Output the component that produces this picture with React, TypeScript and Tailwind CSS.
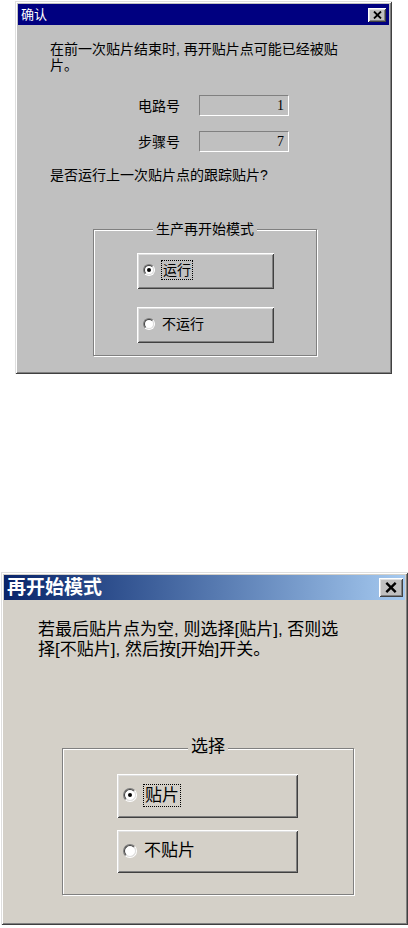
import type { ReactNode } from 'react';

const cjk = { fontFamily: '"Liberation Sans", "Noto Sans CJK SC", sans-serif' };

const raised =
  'shadow-[inset_1px_1px_0_#ffffff,inset_-1px_-1px_0_#404040,inset_2px_2px_0_#dfdfdf,inset_-2px_-2px_0_#808080]';
const frame =
  'shadow-[inset_1px_1px_0_#dfdfdf,inset_-1px_-1px_0_#404040,inset_2px_2px_0_#ffffff,inset_-2px_-2px_0_#808080]';

function CloseButton({ size }: { size: 'sm' | 'lg' }) {
  const box = size === 'sm' ? 'w-[18px] h-[14px]' : 'w-[24px] h-[19px]';
  const icon = size === 'sm' ? 9 : 12;
  return (
    <div className={`${box} ${raised} flex items-center justify-center bg-[#c0c0c0]`}>
      <svg width={icon} height={icon - 1} viewBox="0 0 9 8">
        <path d="M1 0.5 L8 7.5 M8 0.5 L1 7.5" stroke="#000" strokeWidth="1.8" />
      </svg>
    </div>
  );
}

function Radio({ checked, big }: { checked?: boolean; big?: boolean }) {
  return (
    <span
      className={`${big ? 'w-[14px] h-[14px]' : 'w-[12px] h-[12px]'} rounded-full border border-t-[#808080] border-l-[#808080] border-b-white border-r-white flex shrink-0`}
    >
      <span className="flex-1 rounded-full border border-t-[#404040] border-l-[#404040] border-b-[#dfdfdf] border-r-[#dfdfdf] bg-white flex items-center justify-center">
        {checked && <span className="w-[4px] h-[4px] rounded-full bg-black" />}
      </span>
    </span>
  );
}

function RadioButton({
  label,
  checked,
  big,
  className,
  bg,
}: {
  label: string;
  checked?: boolean;
  big?: boolean;
  className: string;
  bg: string;
}) {
  return (
    <div className={`${className} ${raised} ${bg} flex items-center gap-[6px] pl-[6px] pb-[2px]`}>
      <Radio checked={checked} big={big} />
      <span className={checked ? 'border border-dotted border-black px-px leading-none py-[2px]' : 'px-px'}>
        {label}
      </span>
    </div>
  );
}

function GroupBox({
  title,
  className,
  titleClass,
  children,
}: {
  title: string;
  className: string;
  titleClass: string;
  children: ReactNode;
}) {
  return (
    <div
      className={`relative border border-[#808080] shadow-[1px_1px_0_#ffffff,inset_1px_1px_0_#ffffff] ${className}`}
    >
      <span className={`absolute left-1/2 -translate-x-1/2 px-[3px] whitespace-nowrap ${titleClass}`}>
        {title}
      </span>
      {children}
    </div>
  );
}

function Field({ label, value }: { label: string; value: string }) {
  return (
    <div className="flex items-center ml-[120px] gap-[19px]">
      <span className="w-[42px] text-[14px] leading-[16px]">{label}</span>
      <div className="w-[90px] h-[21px] border border-t-[#808080] border-l-[#808080] border-b-white border-r-white flex items-center justify-end pr-[4px]">
        <span className="text-[14px] leading-none" style={{ fontFamily: '"Liberation Serif", serif' }}>
          {value}
        </span>
      </div>
    </div>
  );
}

export default function App() {
  return (
    <div className="w-[408px] min-h-[928px] bg-white pt-px text-black" style={cjk}>
      {/* 确认 dialog */}
      <div className={`ml-[15px] w-[377px] h-[373px] bg-[#c0c0c0] ${frame} p-[3px] flex flex-col`}>
        <div className="h-[21px] bg-[#000080] flex items-center justify-between pl-[3px] pr-[3px]">
          <span className="text-white text-[13px] leading-none">确认</span>
          <CloseButton size="sm" />
        </div>

        <div className="flex flex-col">
          <p className="mt-[16px] pl-[32px] text-[14px] leading-[16px] whitespace-nowrap">
            在前一次贴片结束时, 再开贴片点可能已经被贴
            <br />
            片。
          </p>
          <div className="mt-[22px]">
            <Field label="电路号" value="1" />
          </div>
          <div className="mt-[15px]">
            <Field label="步骤号" value="7" />
          </div>
          <p className="mt-[15px] pl-[32px] text-[14px] leading-[16px]">是否运行上一次贴片点的跟踪贴片?</p>

          <GroupBox
            title="生产再开始模式"
            className="mt-[46px] ml-[75px] w-[224px] h-[127px] pt-[23px] pl-[43px]"
            titleClass="-top-[9px] text-[14px] leading-[16px] bg-[#c0c0c0]"
          >
            <div className="flex flex-col gap-[18px] text-[14px]">
              <RadioButton label="运行" checked className="w-[137px] h-[36px]" bg="bg-[#c0c0c0]" />
              <RadioButton label="不运行" className="w-[137px] h-[36px]" bg="bg-[#c0c0c0]" />
            </div>
          </GroupBox>
        </div>
      </div>

      {/* 再开始模式 dialog */}
      <div className={`mt-[198px] ml-px w-[407px] h-[353px] bg-[#d4d0c8] ${frame} p-[3px] flex flex-col`}>
        <div className="h-[25px] bg-gradient-to-r from-[#0a246a] to-[#a6caf0] flex items-center justify-between pl-[3px] pr-[2px]">
          <span className="text-white text-[19px] font-bold leading-none">再开始模式</span>
          <CloseButton size="lg" />
        </div>

        <p className="mt-[20px] pl-[34px] text-[17px] leading-[20px] whitespace-nowrap">
          若最后贴片点为空, 则选择[贴片], 否则选
          <br />
          择[不贴片], 然后按[开始]开关。
        </p>

        <GroupBox
          title="选择"
          className="mt-[88px] ml-[58px] w-[292px] h-[147px] pt-[25px] pl-[54px]"
          titleClass="-top-[12px] text-[17px] leading-[20px] bg-[#d4d0c8]"
        >
          <div className="flex flex-col gap-[12px] text-[17px]">
            <RadioButton label="贴片" checked big className="w-[181px] h-[44px]" bg="bg-[#d4d0c8]" />
            <RadioButton label="不贴片" big className="w-[181px] h-[43px]" bg="bg-[#d4d0c8]" />
          </div>
        </GroupBox>
      </div>
    </div>
  );
}
